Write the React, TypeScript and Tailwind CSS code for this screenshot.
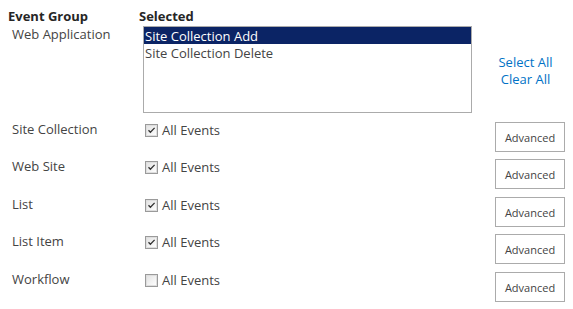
import React from "react"

const groups = [
  { label: "Site Collection", checked: true, h: "h-[37px]" },
  { label: "Web Site", checked: true, h: "h-[38px]" },
  { label: "List", checked: true, h: "h-[37px]" },
  { label: "List Item", checked: true, h: "h-[38px]" },
  { label: "Workflow", checked: false, h: "h-[38px]" },
]

const CheckBox = ({ checked }: { checked: boolean }) => (
  <svg width="13" height="13" viewBox="0 0 13 13" className="shrink-0">
    <defs>
      <linearGradient id="cbg" x1="0" y1="0" x2="1" y2="1">
        <stop offset="0" stopColor="#e2e2e2" />
        <stop offset="1" stopColor="#ffffff" />
      </linearGradient>
    </defs>
    <rect x="0.5" y="0.5" width="12" height="12" fill="#fff" stroke="#9a9a9a" />
    <rect x="1.5" y="1.5" width="10" height="10" fill="url(#cbg)" stroke="#dedede" />
    {checked && (
      <path d="M3.5 6.2 L5.4 8.3 L9.6 3.9" fill="none" stroke="#333" strokeWidth="1.3" />
    )}
  </svg>
)

export default function App() {
  return (
    <div className="w-[573px] h-[309px] bg-white font-['Open_Sans',sans-serif] text-[13px] leading-[17px] text-[#444] overflow-hidden">
      {/* header */}
      <div className="flex pt-[8px] h-[26px]">
        <div className="w-[139px] pl-[8px] font-bold text-[#262626]">Event Group</div>
        <div className="font-bold text-[#262626]">Selected</div>
      </div>

      {/* web application */}
      <div className="flex">
        <div className="w-[143px] pl-[12px]">Web Application</div>
        <div className="w-[329px] h-[87px] border border-[#ababab] flex flex-col">
          <div className="h-[17px] bg-[#0b2465] text-white pl-[1px] leading-[18px]">Site Collection Add</div>
          <div className="h-[17px] pl-[1px] leading-[18px]">Site Collection Delete</div>
        </div>
        <div className="flex-1 flex flex-col items-center justify-center pl-[6px] pt-[3px] text-[#0072c6]">
          <a>Select All</a>
          <a>Clear All</a>
        </div>
      </div>

      {/* event groups */}
      <div className="pt-[7px]">
        {groups.map((g) => (
          <div key={g.label} className={`flex items-start ${g.h}`}>
            <div className="w-[145px] pl-[12px] pt-[1px]">{g.label}</div>
            <div className="flex-1 flex items-center gap-[4px] mt-[2px]">
              <CheckBox checked={g.checked} />
              <span>All Events</span>
            </div>
            <button className="w-[70px] h-[30px] mt-[2px] mr-[8px] border border-[#ababab] bg-white text-[11px] text-[#444]">
              Advanced
            </button>
          </div>
        ))}
      </div>
    </div>
  )
}
